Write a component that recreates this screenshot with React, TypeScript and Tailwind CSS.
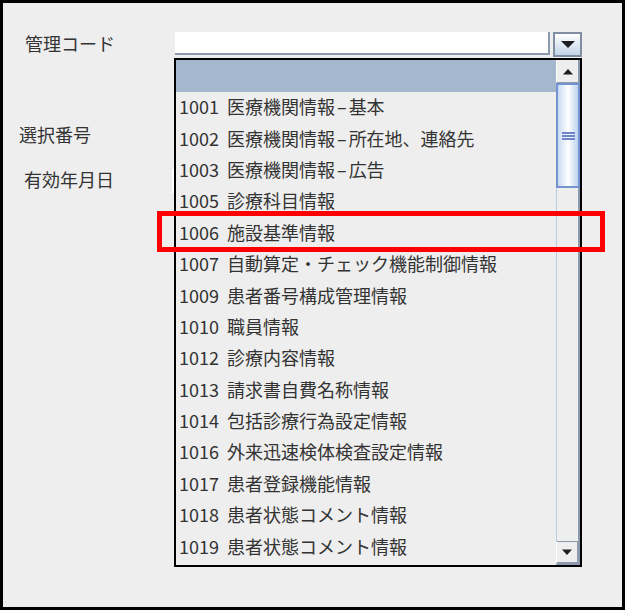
import React from "react";

const rows = [
  ["1001", "医療機関情報–基本"],
  ["1002", "医療機関情報–所在地、連絡先"],
  ["1003", "医療機関情報–広告"],
  ["1005", "診療科目情報"],
  ["1006", "施設基準情報"],
  ["1007", "自動算定・チェック機能制御情報"],
  ["1009", "患者番号構成管理情報"],
  ["1010", "職員情報"],
  ["1012", "診療内容情報"],
  ["1013", "請求書自費名称情報"],
  ["1014", "包括診療行為設定情報"],
  ["1016", "外来迅速検体検査設定情報"],
  ["1017", "患者登録機能情報"],
  ["1018", "患者状態コメント情報"],
  ["1019", "患者状態コメント情報"],
];

const font = { fontFamily: '"Noto Sans CJK JP", "Noto Sans", sans-serif' };

function Name({ text }: { text: string }) {
  const parts = text.split("–");
  if (parts.length === 1) return <span className="ml-[8px]">{text}</span>;
  return (
    <span className="ml-[8px]">
      {parts[0]}
      <span className="mx-[2px]">–</span>
      {parts[1]}
    </span>
  );
}

export default function App() {
  return (
    <div
      className="relative w-[625px] h-[610px] border-[3px] border-black bg-[#eeeeee] text-[#333333] text-[18px] leading-none overflow-hidden"
      style={font}
    >
      <div className="flex flex-col pt-[29px]">
        {/* Row 1 */}
        <div className="flex items-center h-[25px]">
          <div className="w-[172px] pl-[22px] pb-[4px]">管理コード</div>
          <div className="w-[375px] h-[23px] bg-white border-b-2 border-r-2 border-[#8c9aab] self-start" />
          <div className="ml-[3px] w-[29px] h-[25px] border-2 border-[#7f8ea3] bg-gradient-to-b from-white to-[#c3d3e8] flex items-center justify-center">
            <svg width="16" height="9" viewBox="0 0 16 9">
              <path d="M1 1 H15 L8 8 Z" fill="#1e1e1e" />
            </svg>
          </div>
        </div>
        {/* Row 2 */}
        <div className="flex items-center h-[24px] mt-[67px]">
          <div className="pl-[16px] pb-[4px]">選択番号</div>
        </div>
        {/* Row 3 */}
        <div className="flex items-center h-[24px] mt-[21px]">
          <div className="w-[169px] pl-[21px] pb-[4px]">有効年月日</div>
          <div className="w-[120px] h-[24px] bg-white" />
        </div>
      </div>

      {/* Popup list */}
      <div className="absolute left-[171px] top-[55px] w-[408px] h-[509px] border-2 border-black bg-[#eeeeee] flex">
        <div className="flex-1 flex flex-col">
          <div className="h-[32px] bg-[#a3b8cc]" />
          {rows.map(([num, name], i) => (
            <div key={i} className="h-[31.4px] flex items-center pl-[3px] pb-[3px] whitespace-nowrap">
              <span>{num}</span>
              <Name text={name} />
            </div>
          ))}
        </div>
        {/* Scrollbar */}
        <div className="w-[24px] flex flex-col">
          <div className="h-[23px] border-r-2 border-b border-[#8c9aab] border-l border-l-white bg-[#eeeeee] flex items-center justify-center">
            <svg width="12" height="7" viewBox="0 0 12 7">
              <path d="M1 6.5 H11 L6 1 Z" fill="#1e1e1e" />
            </svg>
          </div>
          <div className="h-[105px] border-2 border-[#7593cf] bg-gradient-to-r from-[#c9daf2] via-white to-[#c0d3ef] flex items-center justify-center">
            <div className="flex flex-col gap-[1px]">
              <div className="w-[13px] h-[2px] bg-[#6a86c8]" />
              <div className="w-[13px] h-[2px] bg-[#6a86c8]" />
              <div className="w-[13px] h-[2px] bg-[#6a86c8]" />
            </div>
          </div>
          <div className="flex-1 border-l border-l-[#b7cbe3] border-r-2 border-r-[#8c9aab] bg-[#eeeeee]" />
          <div className="h-[24px] border-l border-l-white border-t border-t-[#8c9aab] border-r-[3px] border-b-[3px] border-[#8c9aab] bg-[#eeeeee] flex items-center justify-center">
            <svg width="12" height="7" viewBox="0 0 12 7">
              <path d="M1 0.5 H11 L6 6 Z" fill="#1e1e1e" />
            </svg>
          </div>
        </div>
      </div>

      {/* Red highlight */}
      <div className="absolute left-[154px] top-[208px] w-[448px] h-[41px] border-[5px] border-[#ff0000]" />
    </div>
  );
}
